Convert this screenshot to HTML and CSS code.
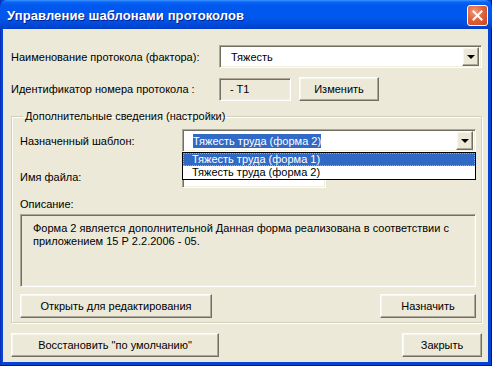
FILE: index.html
```html
<!DOCTYPE html>
<html lang="ru">
<head>
    <meta charset="UTF-8">
    <title>Управление шаблонами протоколов</title>
    <link rel="stylesheet" href="styles.css">
</head>
<body>

<div class="window">
    <!-- Title bar -->
    <div class="titlebar">
        <span class="title">Управление шаблонами протоколов</span>
        <button class="close-btn" title="Закрыть">
            <svg width="11" height="11" viewBox="0 0 11 11">
                <path d="M1.5 1.5 L9.5 9.5 M9.5 1.5 L1.5 9.5" stroke="#fff" stroke-width="2" stroke-linecap="square"/>
            </svg>
        </button>
    </div>

    <div class="client">
        <div class="row row-name">
            <span class="label label-wide">Наименование протокола (фактора):</span>
            <div class="combo sunken combo-name">
                <span class="combo-text">Тяжесть</span>
                <span class="combo-arrow raised"><i class="tri"></i></span>
            </div>
        </div>

        <div class="row row-id">
            <span class="label label-wide">Идентификатор номера протокола :</span>
            <div class="field sunken field-id">- T1</div>
            <button class="btn raised btn-change">Изменить</button>
        </div>

        <!-- Extra settings -->
        <fieldset class="group">
            <legend>Дополнительные сведения (настройки)</legend>

            <div class="row row-template">
                <span class="label label-short">Назначенный шаблон:</span>
                <div class="combo sunken combo-template">
                    <span class="combo-text"><span class="sel">Тяжесть труда (форма 2)</span></span>
                    <span class="combo-arrow raised"><i class="tri"></i></span>
                </div>
                <ul class="dropdown">
                    <li class="active">Тяжесть труда (форма 1)</li>
                    <li>Тяжесть труда (форма 2)</li>
                </ul>
            </div>

            <div class="row row-file">
                <span class="label label-short">Имя файла:</span>
                <div class="field sunken field-file"></div>
            </div>

            <div class="label desc-label">Описание:</div>
            <div class="memo sunken">
                Форма 2 является дополнительной Данная форма реализована в соответствии с приложением 15 Р 2.2.2006 - 05.
            </div>

            <div class="row row-actions">
                <button class="btn raised btn-open">Открыть для редактирования</button>
                <button class="btn raised btn-assign">Назначить</button>
            </div>
        </fieldset>

        <div class="row row-bottom">
            <button class="btn raised btn-restore">Восстановить "по умолчанию"</button>
            <button class="btn raised btn-close">Закрыть</button>
        </div>
    </div>
</div>

</body>
</html>
```

FILE: styles.css
```css
/* General */
body {
    margin: 0;
    padding: 0;
    font-family: "Liberation Sans", Arial, sans-serif;
    font-size: 11px;
    color: #000;
    background-color: #fff;
}

button {
    font-family: inherit;
    font-size: 11px;
    color: #000;
    padding: 0;
    cursor: pointer;
}

/* Window frame */
.window {
    width: 492px;
    height: 366px;
    background-color: #0443d4;
    box-sizing: border-box;
    border-left: 1px solid #0a2fb8;
    border-right: 1px solid #00138c;
    border-bottom: 1px solid #00138c;
    display: flex;
    flex-direction: column;
}

/* Title bar */
.titlebar {
    height: 29px;
    margin: 0 -1px;
    flex: none;
    display: flex;
    align-items: center;
    justify-content: space-between;
    padding: 0 4px 0 7px;
    border-radius: 7px 7px 0 0;
    background: linear-gradient(to bottom, #3d95ff 0, #0a66f3 2px, #0058ee 5px, #0057ec 18px, #0049d9 25px, #003dc6 29px);
}

.title {
    color: #fff;
    font-family: "Liberation Sans", Arial, sans-serif;
    font-weight: bold;
    font-size: 13px;
    letter-spacing: 0.1px;
    text-shadow: 1px 1px #0a1e8c;
    margin-top: 1px;
}

.close-btn {
    width: 21px;
    height: 21px;
    margin-top: 2px;
    border: 1px solid #fff;
    border-radius: 3px;
    background: radial-gradient(circle at 35% 30%, #ef9a7c 0, #e0643d 45%, #c9441c 100%);
    display: flex;
    align-items: center;
    justify-content: center;
}

/* Client area */
.client {
    flex: 1;
    margin: 0 3px 3px 2px;
    background-color: #ece9d8;
    padding: 16px 6px 0 8px;
}

.row {
    display: flex;
    align-items: center;
}

.label {
    white-space: nowrap;
}

.label-wide {
    width: 208px;
    flex: none;
}

.label-short {
    width: 162px;
    flex: none;
}

/* 3D borders */
.sunken {
    box-sizing: border-box;
    border: 1px solid;
    border-color: #aca899 #fff #fff #aca899;
    box-shadow: inset 1px 1px #716f64, inset -1px -1px #f1efe2;
}

.raised {
    box-sizing: border-box;
    border: 1px solid;
    border-color: #fff #716f64 #716f64 #fff;
    box-shadow: inset -1px -1px #aca899, inset 1px 1px #f7f6ef;
    background-color: #ece9d8;
}

/* Combo box */
.combo {
    height: 23px;
    background-color: #fff;
    display: flex;
    align-items: center;
    padding: 2px;
}

.combo-text {
    flex: 1;
    padding-left: 9px;
    white-space: nowrap;
}

.combo-arrow {
    width: 17px;
    height: 19px;
    flex: none;
    display: flex;
    align-items: center;
    justify-content: center;
}

.tri {
    width: 0;
    height: 0;
    border-left: 4px solid transparent;
    border-right: 4px solid transparent;
    border-top: 4px solid #000;
    margin-top: 1px;
}

.combo-name {
    flex: 1;
}

.row-id {
    margin-top: 9px;
    height: 24px;
}

.field {
    height: 23px;
    background-color: #ece9d8;
    display: flex;
    align-items: center;
    padding-left: 10px;
}

.field-id {
    width: 72px;
}

.btn {
    height: 24px;
    text-align: center;
}

.btn-change {
    width: 80px;
    margin-left: 8px;
}

/* Group frame */
.group {
    margin: 9px 0 0 0;
    padding: 7px 5px 6px 8px;
    height: 213px;
    box-sizing: border-box;
    border: 1px solid #d0d0bf;
    box-shadow: inset 1px 1px #fff, 1px 1px #fff;
}

.group legend {
    padding: 0 2px;
    margin-left: 3px;
    font-size: 11px;
}

.row-template {
    position: relative;
}

.combo-template {
    flex: 1;
}

.combo-template .combo-text {
    padding-left: 8px;
}

.sel {
    background-color: #316ac5;
    color: #fff;
    padding: 1px 0;
}

/* Open list of the template combo */
.dropdown {
    position: absolute;
    left: 162px;
    right: 0;
    top: 23px;
    margin: 0;
    padding: 0;
    list-style: none;
    background-color: #fff;
    border: 1px solid #000;
    z-index: 2;
}

.dropdown li {
    height: 13px;
    line-height: 13px;
    padding-left: 9px;
    box-sizing: border-box;
}

.dropdown li.active {
    background-color: #316ac5;
    color: #fff;
    outline: 1px dotted #e8a33c;
    outline-offset: -1px;
}

.row-file {
    margin-top: 13px;
}

.field-file {
    width: 144px;
    background-color: #fff;
}

.desc-label {
    margin-top: 10px;
}

.memo {
    margin-top: 4px;
    height: 73px;
    background-color: #ece9d8;
    padding: 7px 12px 5px;
    line-height: 13px;
}

.row-actions {
    margin-top: 7px;
    justify-content: space-between;
}

.btn-open {
    width: 192px;
}

.btn-assign {
    width: 96px;
}

/* Bottom buttons */
.row-bottom {
    margin-top: 10px;
    justify-content: space-between;
}

.btn-restore {
    width: 208px;
}

.btn-close {
    width: 80px;
}
```
